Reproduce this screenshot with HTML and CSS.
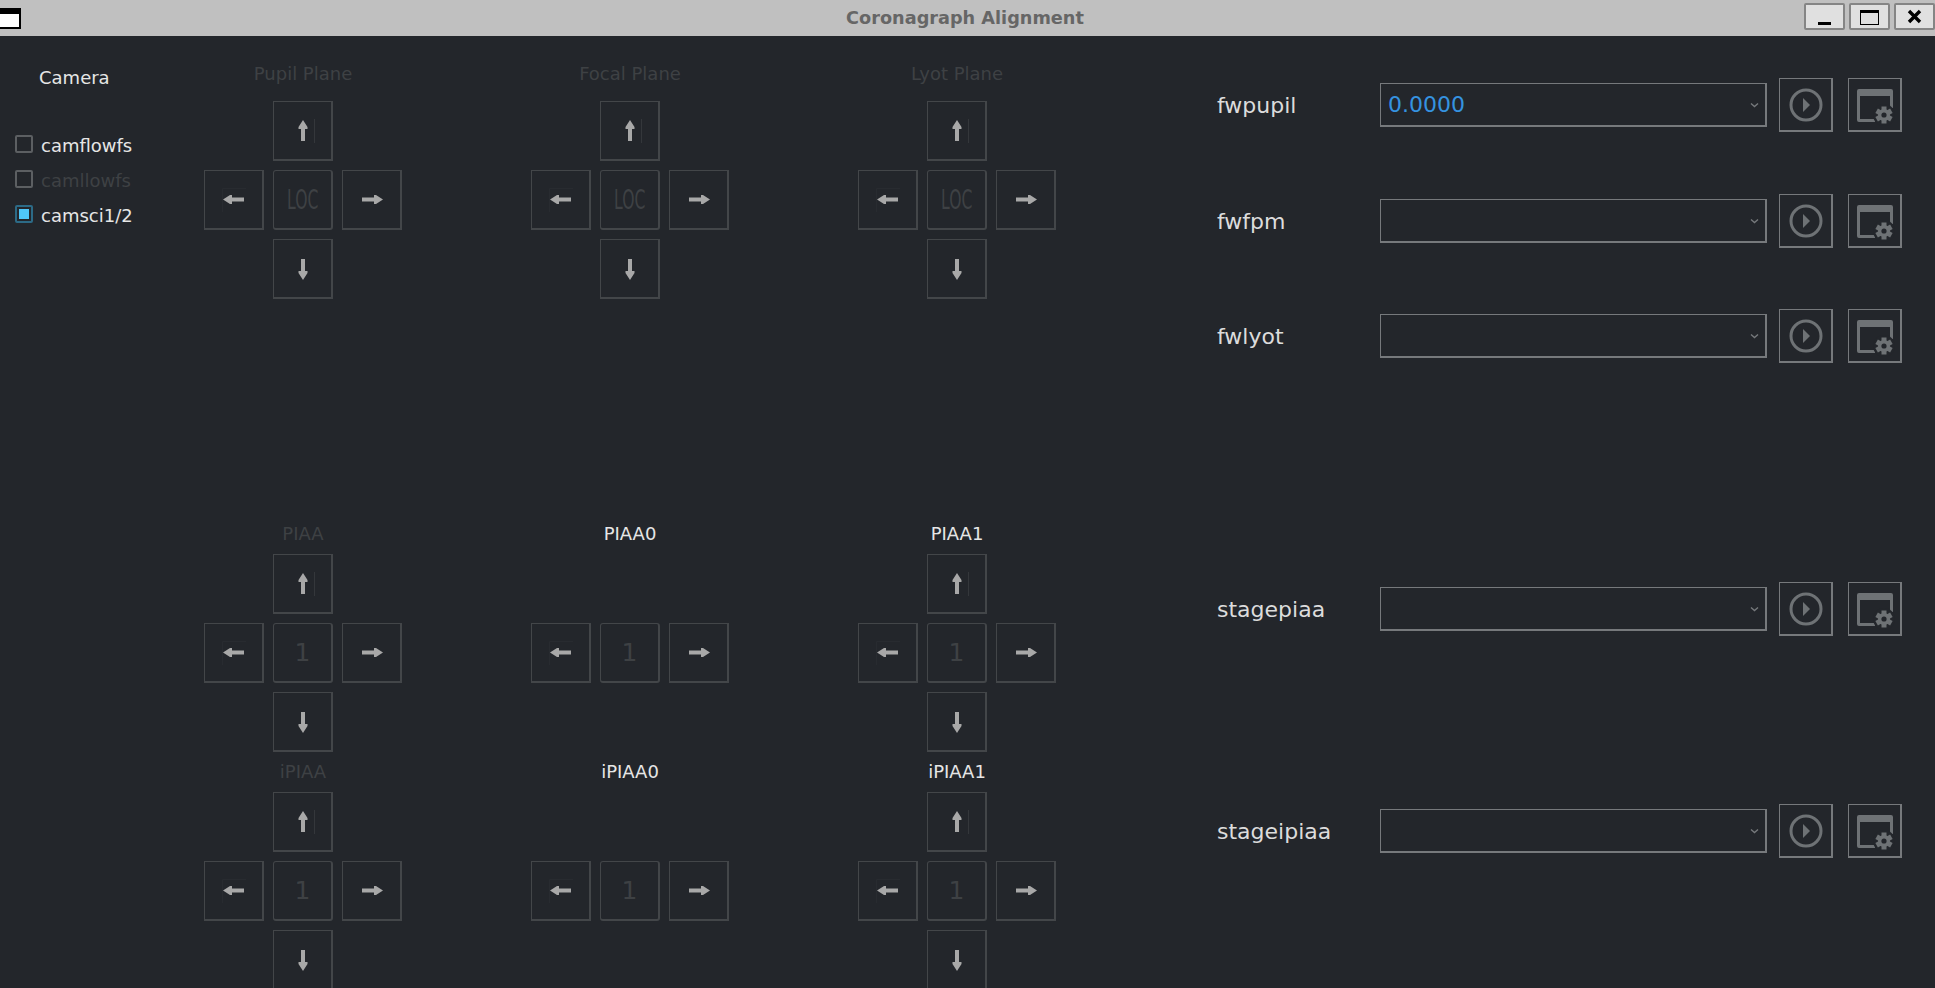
FILE: index.html
```html
<!DOCTYPE html>
<html>

  <head>
    <meta charset="utf-8">
    <title>Coronagraph Alignment</title>
    <link rel="stylesheet" href="styles.css">
  </head>

  <body>
    <svg class="defs" width="0" height="0">
      <symbol id="arrow-up" viewBox="0 0 24 24">
        <path class="ghost" d="M23.5 0V24"/>
        <polygon points="12,1 16.5,8 16.5,10 14,10 14,22 10,22 10,10 7.5,10 7.5,8"/>
      </symbol>
      <symbol id="arrow-down" viewBox="0 0 24 24">
        <polygon points="12,23 16.5,16 16.5,14 14,14 14,2 10,2 10,14 7.5,14 7.5,16"/>
      </symbol>
      <symbol id="arrow-left" viewBox="0 0 24 24">
        <path class="ghost faint" d="M0.5 24V0.5H24"/>
        <polygon points="1,11.5 8,7 10,7 10,9.5 22,9.5 22,13.5 10,13.5 10,16 8,16"/>
      </symbol>
      <symbol id="arrow-right" viewBox="0 0 24 24">
        <polygon points="23,11.5 16,7 14,7 14,9.5 2,9.5 2,13.5 14,13.5 14,16 16,16"/>
      </symbol>
      <symbol id="icon-play" viewBox="0 0 54 54">
        <circle class="ring" cx="27" cy="27" r="15"/>
        <polygon class="solid" points="24,20 31,27 24,34"/>
      </symbol>
      <symbol id="icon-settings" viewBox="0 0 54 54">
        <path class="solid" d="M11 11H43Q45 11 45 13V30H42V18H12V41H27V44H11Q9 44 9 42V13Q9 11 11 11Z"/>
        <circle class="hole" cx="36" cy="37" r="11"/>
        <rect class="solid" x="33.5" y="28.5" width="5" height="17"/>
        <rect class="solid" x="33.5" y="28.5" width="5" height="17" transform="rotate(60 36 37)"/>
        <rect class="solid" x="33.5" y="28.5" width="5" height="17" transform="rotate(120 36 37)"/>
        <circle class="solid" cx="36" cy="37" r="6"/>
        <circle class="hole" cx="36" cy="37" r="2.6"/>
      </symbol>
      <symbol id="chevron" viewBox="0 0 9 6">
        <path class="chev" d="M1 1.5L4.5 4.5L8 1.5"/>
      </symbol>
    </svg>

    <header class="titlebar">
      <div class="win-icon"></div>
      <div class="win-title">Coronagraph Alignment</div>
      <div class="win-buttons">
        <div class="win-btn"><span class="glyph-min"></span></div>
        <div class="win-btn"><span class="glyph-max"></span></div>
        <div class="win-btn">
          <svg width="15" height="15" viewBox="0 0 15 15"><path d="M2 2L13 13M13 2L2 13"/></svg>
        </div>
      </div>
    </header>

    <main class="app">

      <section class="cameras">
        <div class="cameras-title">Camera</div>
        <label class="check"><span class="box"></span><span class="check-text">camflowfs</span></label>
        <label class="check off"><span class="box"></span><span class="check-text">camllowfs</span></label>
        <label class="check"><span class="box on"></span><span class="check-text">camsci1/2</span></label>
      </section>

      <section class="stages">

        <div class="stage first">
          <div class="stage-name off">Pupil Plane</div>
          <div class="cross">
            <div class="btn up"><svg><use href="#arrow-up"/></svg></div>
            <div class="btn left"><svg><use href="#arrow-left"/></svg></div>
            <div class="btn mid"><span class="lock"><span>LOC</span></span></div>
            <div class="btn right"><svg><use href="#arrow-right"/></svg></div>
            <div class="btn down"><svg><use href="#arrow-down"/></svg></div>
          </div>
        </div>
        <div class="stage first">
          <div class="stage-name off">Focal Plane</div>
          <div class="cross">
            <div class="btn up"><svg><use href="#arrow-up"/></svg></div>
            <div class="btn left"><svg><use href="#arrow-left"/></svg></div>
            <div class="btn mid"><span class="lock"><span>LOC</span></span></div>
            <div class="btn right"><svg><use href="#arrow-right"/></svg></div>
            <div class="btn down"><svg><use href="#arrow-down"/></svg></div>
          </div>
        </div>
        <div class="stage first">
          <div class="stage-name off">Lyot Plane</div>
          <div class="cross">
            <div class="btn up"><svg><use href="#arrow-up"/></svg></div>
            <div class="btn left"><svg><use href="#arrow-left"/></svg></div>
            <div class="btn mid"><span class="lock"><span>LOC</span></span></div>
            <div class="btn right"><svg><use href="#arrow-right"/></svg></div>
            <div class="btn down"><svg><use href="#arrow-down"/></svg></div>
          </div>
        </div>

        <div class="stage">
          <div class="stage-name off">PIAA</div>
          <div class="cross">
            <div class="btn up"><svg><use href="#arrow-up"/></svg></div>
            <div class="btn left"><svg><use href="#arrow-left"/></svg></div>
            <div class="btn mid"><span class="step">1</span></div>
            <div class="btn right"><svg><use href="#arrow-right"/></svg></div>
            <div class="btn down"><svg><use href="#arrow-down"/></svg></div>
          </div>
        </div>
        <div class="stage">
          <div class="stage-name">PIAA0</div>
          <div class="cross">
            <div class="btn left"><svg><use href="#arrow-left"/></svg></div>
            <div class="btn mid"><span class="step">1</span></div>
            <div class="btn right"><svg><use href="#arrow-right"/></svg></div>
          </div>
        </div>
        <div class="stage">
          <div class="stage-name">PIAA1</div>
          <div class="cross">
            <div class="btn up"><svg><use href="#arrow-up"/></svg></div>
            <div class="btn left"><svg><use href="#arrow-left"/></svg></div>
            <div class="btn mid"><span class="step">1</span></div>
            <div class="btn right"><svg><use href="#arrow-right"/></svg></div>
            <div class="btn down"><svg><use href="#arrow-down"/></svg></div>
          </div>
        </div>

        <div class="stage">
          <div class="stage-name off">iPIAA</div>
          <div class="cross">
            <div class="btn up"><svg><use href="#arrow-up"/></svg></div>
            <div class="btn left"><svg><use href="#arrow-left"/></svg></div>
            <div class="btn mid"><span class="step">1</span></div>
            <div class="btn right"><svg><use href="#arrow-right"/></svg></div>
            <div class="btn down"><svg><use href="#arrow-down"/></svg></div>
          </div>
        </div>
        <div class="stage">
          <div class="stage-name">iPIAA0</div>
          <div class="cross">
            <div class="btn left"><svg><use href="#arrow-left"/></svg></div>
            <div class="btn mid"><span class="step">1</span></div>
            <div class="btn right"><svg><use href="#arrow-right"/></svg></div>
          </div>
        </div>
        <div class="stage">
          <div class="stage-name">iPIAA1</div>
          <div class="cross">
            <div class="btn up"><svg><use href="#arrow-up"/></svg></div>
            <div class="btn left"><svg><use href="#arrow-left"/></svg></div>
            <div class="btn mid"><span class="step">1</span></div>
            <div class="btn right"><svg><use href="#arrow-right"/></svg></div>
            <div class="btn down"><svg><use href="#arrow-down"/></svg></div>
          </div>
        </div>

      </section>

      <section class="devices">
        <div class="device">
          <div class="device-name">fwpupil</div>
          <div class="combo"><span class="combo-value">0.0000</span><svg class="chevron"><use href="#chevron"/></svg></div>
          <div class="tool"><svg><use href="#icon-play"/></svg></div>
          <div class="tool"><svg><use href="#icon-settings"/></svg></div>
        </div>
        <div class="device">
          <div class="device-name">fwfpm</div>
          <div class="combo"><span class="combo-value"></span><svg class="chevron"><use href="#chevron"/></svg></div>
          <div class="tool"><svg><use href="#icon-play"/></svg></div>
          <div class="tool"><svg><use href="#icon-settings"/></svg></div>
        </div>
        <div class="device">
          <div class="device-name">fwlyot</div>
          <div class="combo"><span class="combo-value"></span><svg class="chevron"><use href="#chevron"/></svg></div>
          <div class="tool"><svg><use href="#icon-play"/></svg></div>
          <div class="tool"><svg><use href="#icon-settings"/></svg></div>
        </div>
        <div class="device">
          <div class="device-name">stagepiaa</div>
          <div class="combo"><span class="combo-value"></span><svg class="chevron"><use href="#chevron"/></svg></div>
          <div class="tool"><svg><use href="#icon-play"/></svg></div>
          <div class="tool"><svg><use href="#icon-settings"/></svg></div>
        </div>
        <div class="device">
          <div class="device-name">stageipiaa</div>
          <div class="combo"><span class="combo-value"></span><svg class="chevron"><use href="#chevron"/></svg></div>
          <div class="tool"><svg><use href="#icon-play"/></svg></div>
          <div class="tool"><svg><use href="#icon-settings"/></svg></div>
        </div>
      </section>

    </main>
  </body>
</html>
```

FILE: styles.css
```css
html, body {
  margin: 0;
  height: 988px;
  overflow: hidden;
}

body {
  font-family: "DejaVu Sans", sans-serif;
  background-color: #23262b;
  color: #e6e6e6;
}

.defs {
  position: absolute;
}

/* window manager bar */
.titlebar {
  display: grid;
  grid-template-columns: 1fr auto 1fr;
  align-items: center;
  height: 36px;
  background-color: #c0c0c0;
}

.win-icon {
  width: 19px;
  height: 13px;
  background-color: #fff;
  border-top: 6px solid #000;
  border-right: 2px solid #000;
  border-bottom: 2px solid #000;
}

.win-title {
  margin-right: 5px;
  font-size: 17.7px;
  font-weight: bold;
  color: #666;
}

.win-buttons {
  display: flex;
  justify-content: flex-end;
  gap: 4px;
  padding-bottom: 3px;
}

.win-btn {
  display: flex;
  align-items: center;
  justify-content: center;
  box-sizing: border-box;
  width: 41px;
  height: 27px;
  background-color: #e0e0e0;
  border: 2px solid #858585;
  border-radius: 2px;
}

.win-btn svg {
  fill: none;
  stroke: #000;
  stroke-width: 3.4;
}

.glyph-min {
  width: 13px;
  height: 3px;
  margin-top: 14px;
  background-color: #000;
}

.glyph-max {
  box-sizing: border-box;
  width: 19px;
  height: 15px;
  border: 1px solid #000;
  border-top-width: 3px;
  margin-top: 1px;
}

/* three columns */
.app {
  display: grid;
  grid-template-columns: 204px 852px 1fr;
  height: 952px;
}

.cameras {
  padding: 30px 0 0 15px;
  font-size: 18px;
}

.cameras-title {
  height: 24px;
  line-height: 24px;
  margin: 0 0 45px 24px;
}

.check {
  display: flex;
  align-items: center;
  gap: 8px;
  height: 18px;
  margin-bottom: 17px;
}

.check-text {
  padding-top: 2px;
}

.check.off {
  color: #3e4144;
}

.box {
  box-sizing: border-box;
  width: 18px;
  height: 18px;
  border: 2px solid #5c5f62;
  border-radius: 2px;
}

.box.on {
  border-color: #2c6a86;
  background-color: #4fc6f8;
  box-shadow: inset 0 0 0 2px #23262b;
}

.stages {
  display: grid;
  grid-template-columns: repeat(3, 198px);
  grid-template-rows: 460px 238px 190px;
  column-gap: 129px;
  padding-top: 28px;
  box-sizing: border-box;
  overflow: hidden;
}

.stage-name {
  height: 20px;
  line-height: 20px;
  margin-bottom: 10px;
  text-align: center;
  font-size: 18px;
}

.stage-name.off {
  color: #3e4144;
}

.first .stage-name {
  margin-bottom: 17px;
}

.cross {
  display: grid;
  grid-template-columns: repeat(3, 60px);
  grid-template-rows: repeat(3, 60px);
  gap: 9px;
}

.btn {
  display: flex;
  align-items: center;
  justify-content: center;
  box-sizing: border-box;
  border: 2px solid #434649;
  border-width: 1px 2px 2px 1px;
  overflow: hidden;
}

.btn svg {
  width: 24px;
  height: 24px;
  fill: #a8a8a8;
}

.ghost {
  fill: none;
  stroke: #34373b;
  stroke-width: 1;
}

.ghost.faint {
  stroke: #282b30;
}

.up { grid-column: 2; grid-row: 1; }
.left { grid-column: 1; grid-row: 2; }
.mid { grid-column: 2; grid-row: 2; border-radius: 3px; }
.right { grid-column: 3; grid-row: 2; }
.down { grid-column: 2; grid-row: 3; }

.lock {
  width: 31px;
  overflow: hidden;
  white-space: nowrap;
  font-size: 26px;
  color: #3e4144;
}

.lock span {
  display: inline-block;
  transform: scaleX(0.6);
  transform-origin: left center;
}

.step {
  font-size: 25px;
  color: #3e4144;
}

/* filter wheels and stages */
.devices {
  display: grid;
  grid-template-rows: 116px 115px 273px 222px 54px;
  padding: 42px 0 0 161px;
}

.device {
  display: flex;
  align-items: center;
  height: 54px;
}

.device-name {
  width: 163px;
  font-size: 22px;
  color: #dcdcdc;
}

.combo {
  display: flex;
  align-items: center;
  justify-content: space-between;
  box-sizing: border-box;
  width: 387px;
  height: 44px;
  margin-right: 12px;
  padding: 0 6px 0 7px;
  border: 1px solid #76797c;
  border-width: 1px 2px 2px 1px;
}

.combo-value {
  font-size: 22px;
  color: #3593e0;
}

.chevron {
  width: 9px;
  height: 6px;
}

.chev {
  fill: none;
  stroke: #76797c;
  stroke-width: 1.4;
}

.tool {
  box-sizing: border-box;
  width: 54px;
  height: 54px;
  margin-right: 15px;
  border: 1px solid #76797c;
  border-width: 1px 2px 2px 1px;
}

.tool svg {
  display: block;
  width: 54px;
  height: 54px;
  margin: -1px 0 0 -1px;
}

.ring {
  fill: none;
  stroke: #6e7275;
  stroke-width: 3;
}

.solid {
  fill: #6e7275;
}

.hole {
  fill: #23262b;
}
```
